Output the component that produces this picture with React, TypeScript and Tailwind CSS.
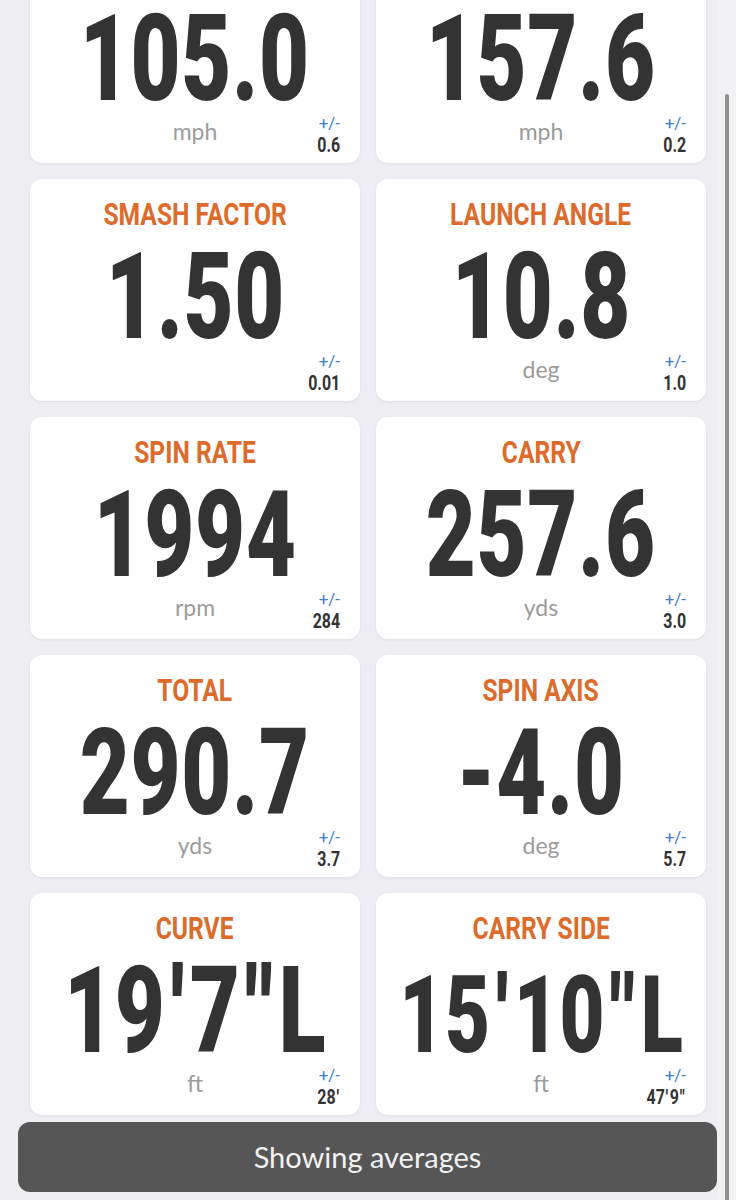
import React from "react";

type Stat = {
  label?: string;
  value: string;
  unit: string;
  dev: string;
  small?: boolean;
};

const stats: Stat[] = [
  { value: "105.0", unit: "mph", dev: "0.6" },
  { value: "157.6", unit: "mph", dev: "0.2" },
  { label: "SMASH FACTOR", value: "1.50", unit: "", dev: "0.01" },
  { label: "LAUNCH ANGLE", value: "10.8", unit: "deg", dev: "1.0" },
  { label: "SPIN RATE", value: "1994", unit: "rpm", dev: "284" },
  { label: "CARRY", value: "257.6", unit: "yds", dev: "3.0" },
  { label: "TOTAL", value: "290.7", unit: "yds", dev: "3.7" },
  { label: "SPIN AXIS", value: "-4.0", unit: "deg", dev: "5.7" },
  { label: "CURVE", value: "19'7\"L", unit: "ft", dev: "28'" },
  { label: "CARRY SIDE", value: "15'10\"L", unit: "ft", dev: "47'9\"", small: true },
];

const condensed = { fontFamily: "Roboto, 'Liberation Sans', sans-serif" };
const lato = { fontFamily: "Lato, 'Open Sans', sans-serif" };

// feet/inch marks get a bit of air on both sides, like the app's font
function Marks({ text, big }: { text: string; big?: boolean }) {
  return (
    <>
      {text.split(/(['"])/).map((part, i) =>
        part === "'" || part === '"' ? (
          <span key={i} className={big ? "px-[7px]" : "pl-[1px] pr-[2px]"}>
            {part}
          </span>
        ) : (
          <React.Fragment key={i}>{part}</React.Fragment>
        )
      )}
    </>
  );
}

function StatCard({ stat }: { stat: Stat }) {
  return (
    <div className="h-[222px] rounded-xl bg-white px-[20px] shadow-[0_1px_3px_rgba(0,0,0,0.07)] flex flex-col items-center">
      {/* title */}
      <div className="mt-[19px] h-[32px] flex justify-center">
        <span
          style={condensed}
          className="inline-block whitespace-nowrap text-[32px] leading-[32px] font-bold text-[#dc6b2c] scale-x-[0.77]"
        >
          {stat.label ?? "\u00a0"}
        </span>
      </div>

      <div className="mt-[17px] h-[100px] flex justify-center">
        <span
          style={condensed}
          className={
            stat.small
              ? "mt-[4px] inline-block whitespace-nowrap text-[108px] leading-[100px] font-black tracking-[1px] text-[#333333] scale-x-[0.72]"
              : "inline-block whitespace-nowrap text-[120px] leading-[100px] font-black tracking-[1px] text-[#333333] scale-x-[0.72]"
          }
        >
          <Marks text={stat.value} big />
        </span>
      </div>

      {/* unit + deviation */}
      <div className="w-full grid grid-cols-[1fr_auto_1fr]">
        <div />
        <div
          style={lato}
          className="mt-[9px] text-[23px] leading-[26px] text-[#9b9b9b]"
        >
          {stat.unit}
        </div>
        <div className="flex flex-col items-end">
          <span
            style={condensed}
            className="mt-[6px] text-[17px] leading-[17px] text-[#3f7fd6]"
          >
            +/-
          </span>
          <span
            style={condensed}
            className="mt-[3px] inline-block whitespace-nowrap origin-right scale-x-[0.76] text-[21px] leading-[21px] font-bold text-[#333333]"
          >
            <Marks text={stat.dev} />
          </span>
        </div>
      </div>
    </div>
  );
}

export default function App() {
  return (
    <div className="relative h-[1200px] overflow-hidden bg-[#eeeef2]">
      <div className="-mt-[59px] grid grid-cols-2 gap-x-4 gap-y-4 px-[30px]">
        {stats.map((s, i) => (
          <StatCard key={i} stat={s} />
        ))}
      </div>

      <div className="mt-[7px] ml-[18px] mr-[19px] h-[70px] rounded-xl bg-[#565656] flex items-center justify-center">
        <span style={lato} className="text-[29px] text-[#f2f2f2]">
          Showing averages
        </span>
      </div>

      {/* scroll indicator */}
      <div className="absolute right-0 top-0 bottom-0 w-[18px] bg-white/25" />
      <div className="absolute right-[7px] top-[94px] -bottom-2 w-[4px] rounded-full bg-[#8f8f8f]" />
    </div>
  );
}
